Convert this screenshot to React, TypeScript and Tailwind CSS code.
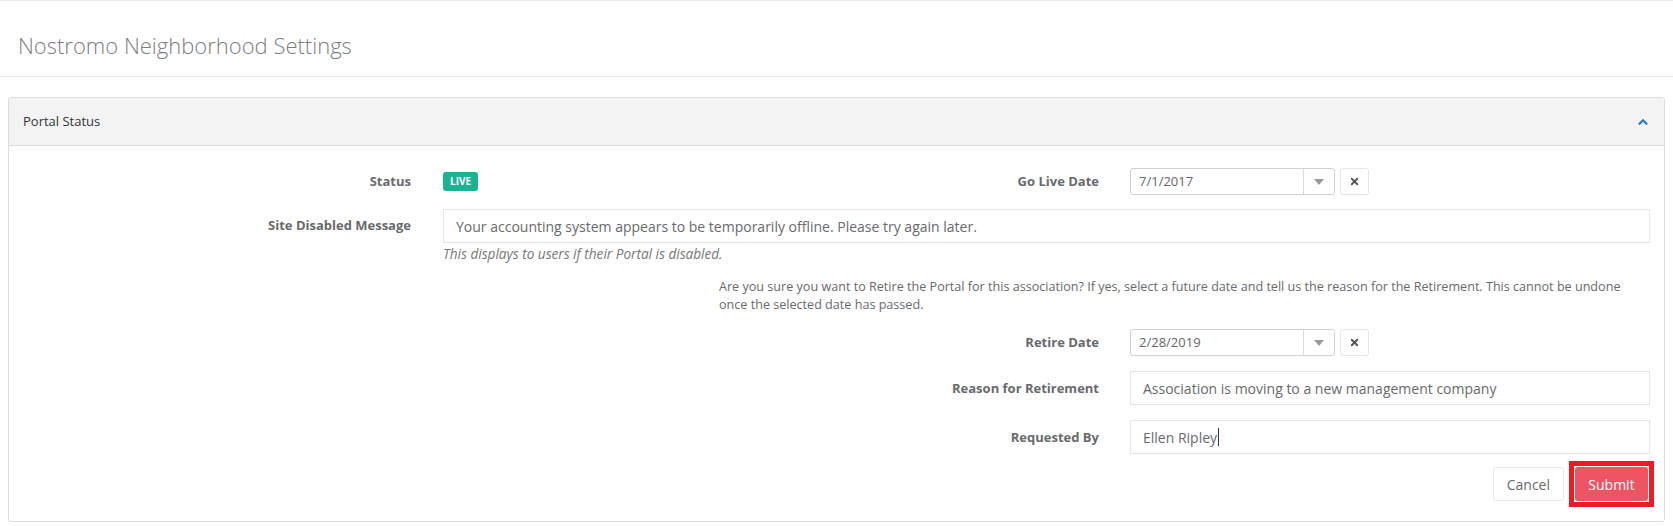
import { ChevronUp, X } from "lucide-react"

const label = "text-right text-[13px] font-bold text-[#676a6c] shrink-0"
const input =
  "h-[34px] border border-[#e5e6e7] bg-white px-[12px] flex items-center text-[14px] text-[#676a6c]"

function DateField({ value }: { value: string }) {
  return (
    <div className="flex items-center">
      <div className="flex h-[27px] w-[205px] items-center rounded-[3px] border border-[#cfd2d4] bg-white">
        <span className="flex-1 pl-[8px] text-[13px] text-[#666]">{value}</span>
        <span className="flex h-full w-[31px] items-center justify-center border-l border-[#d9dbdc]">
          <span className="h-0 w-0 border-x-[5px] border-t-[6px] border-x-transparent border-t-[#9a9a9a]" />
        </span>
      </div>
      <button className="ml-[5px] flex h-[27px] w-[29px] items-center justify-center rounded-[3px] border border-[#e5e6e7] bg-white">
        <X className="h-[11px] w-[11px] text-[#555]" strokeWidth={4} />
      </button>
    </div>
  )
}

export default function App() {
  return (
    <div className="min-h-screen bg-white font-['Open_Sans',sans-serif] text-[13px] text-[#676a6c]">
      <div className="border-t border-[#e7eaec]">
        <div className="flex h-[76px] items-center border-b border-[#e7eaec] pl-[18px] pt-[14px]">
          <h2 className="text-[22px] font-light text-[#7b7d80]">Nostromo Neighborhood Settings</h2>
        </div>
      </div>

      <div className="mx-[8px] mt-[20px] rounded-[3px] border border-[#dcdcdc]">
        <div className="flex h-[48px] items-center justify-between border-b border-[#dcdcdc] bg-[#f3f3f3] pl-[14px] pr-[14px]">
          <span className="text-[13px] text-[#333]">Portal Status</span>
          <ChevronUp className="h-[14px] w-[14px] text-[#2c7bbd]" strokeWidth={4} />
        </div>

        <div className="pb-[14px] pr-[14px] pt-[22px]">
          {/* status + go live */}
          <div className="flex items-center">
            <div className="flex w-[829px] items-center">
              <div className={`${label} w-[402px]`}>Status</div>
              <span className="ml-[32px] rounded-[3px] bg-[#1ab394] px-[7px] py-[2px] text-[10px] font-bold text-white">
                LIVE
              </span>
            </div>
            <div className={`${label} w-[261px]`}>Go Live Date</div>
            <div className="ml-[31px]">
              <DateField value="7/1/2017" />
            </div>
          </div>

          {/* site disabled message */}
          <div className="mt-[14px] flex items-start">
            <div className={`${label} w-[402px] pt-[7px]`}>Site Disabled Message</div>
            <div className="ml-[32px] flex-1">
              <div className={input}>
                Your accounting system appears to be temporarily offline. Please try again later.
              </div>
              <div className="mt-[1px] text-[13.6px] italic text-[#777]">
                This displays to users if their Portal is disabled.
              </div>
            </div>
          </div>

          {/* retirement warning */}
          <p className="ml-[710px] mr-[20px] mt-[14px] text-[12.6px] leading-[18px] text-[#676a6c]">
            Are you sure you want to Retire the Portal for this association? If yes, select a future date and tell
            us the reason for the Retirement. This cannot be undone once the selected date has passed.
          </p>

          <div className="mt-[15px] flex items-center">
            <div className={`${label} w-[1090px]`}>Retire Date</div>
            <div className="ml-[31px]">
              <DateField value="2/28/2019" />
            </div>
          </div>

          <div className="mt-[15px] flex items-center">
            <div className={`${label} w-[1090px]`}>Reason for Retirement</div>
            <div className={`${input} ml-[31px] flex-1`}>Association is moving to a new management company</div>
          </div>

          <div className="mt-[15px] flex items-center">
            <div className={`${label} w-[1090px]`}>Requested By</div>
            <div className={`${input} ml-[31px] flex-1 border-[#1ab394]`}>
              Ellen Ripley
              <span className="ml-px inline-block h-[18px] w-px bg-[#333]" />
            </div>
          </div>

          <div className="mt-[7px] flex items-center justify-end">
            <button className="h-[34px] rounded-[3px] border border-[#e7eaec] bg-white px-[13px] text-[14px] text-[#676a6c]">
              Cancel
            </button>
            <span className="-mr-[4px] ml-[5px] border-[5px] border-[#ec1c24] p-px">
              <span className="flex h-[34px] w-[73px] items-center justify-center rounded-[3px] bg-[#ed5565] text-[14px] text-white">
                Submit
              </span>
            </span>
          </div>
        </div>
      </div>
    </div>
  )
}
